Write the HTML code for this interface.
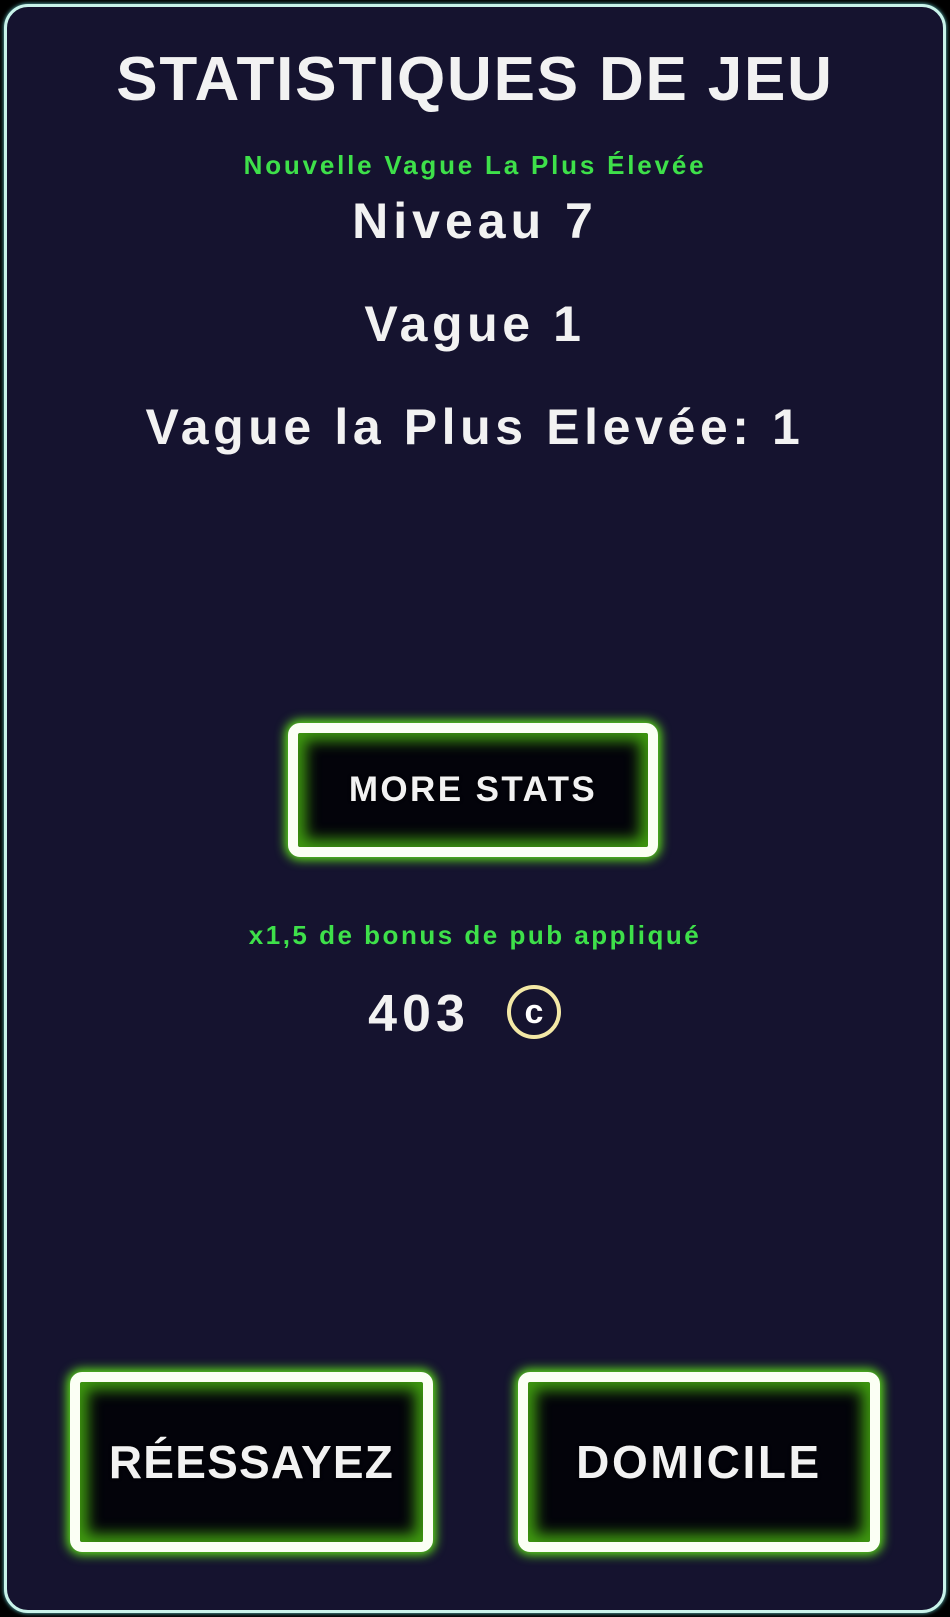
<!DOCTYPE html>
<html><head><meta charset="utf-8"><style>
html,body{margin:0;padding:0;background:#000;width:950px;height:1617px;overflow:hidden}
body{font-family:"Liberation Sans",sans-serif;font-weight:bold;color:#f2f2f2}
.panel{position:absolute;left:4px;top:4px;width:936px;height:1603px;border:3px solid #c8f3ea;border-radius:24px;background:#15132f;box-shadow:0 0 4px #6cc}
.t{position:absolute;left:0;width:950px;text-align:center;white-space:nowrap}
.btn{position:absolute;border:10px solid #fbfff4;border-radius:12px;background:#03030a;box-shadow:0 0 10px 3px #5ee21a,inset 0 0 14px 8px #3f9a10;display:flex;align-items:center;justify-content:center;color:#f2f2f2}
.btn span{text-shadow:0 0 3px #000}
</style></head><body>
<div class="panel"></div>
<div class="t" style="top:44px;font-size:62px;letter-spacing:1.8px">STATISTIQUES DE JEU</div>
<div class="t" style="top:150px;font-size:26px;color:#3ee04a;letter-spacing:2.8px">Nouvelle Vague La Plus Élevée</div>
<div class="t" style="top:192px;font-size:50px;letter-spacing:5px">Niveau 7</div>
<div class="t" style="top:295px;font-size:50px;letter-spacing:4.6px">Vague 1</div>
<div class="t" style="top:398px;font-size:50px;letter-spacing:4.6px">Vague la Plus Elevée: 1</div>
<div class="btn" style="left:288px;top:723px;width:350px;height:114px"><span style="font-size:35px;letter-spacing:2.4px">MORE STATS</span></div>
<div class="t" style="top:920px;font-size:26px;color:#3ee04a;letter-spacing:2.5px">x1,5 de bonus de pub appliqué</div>
<div class="t" style="top:984px;font-size:52px;left:-56px;letter-spacing:5px">403</div>
<div style="position:absolute;left:507px;top:985px;width:54px;height:54px;border:4px solid #f3e8a6;border-radius:50%;box-sizing:border-box;display:flex;align-items:center;justify-content:center;font-size:34px;color:#fff">c</div>
<div class="btn" style="left:70px;top:1372px;width:343px;height:160px"><span style="font-size:46px;letter-spacing:1.2px">RÉESSAYEZ</span></div>
<div class="btn" style="left:518px;top:1372px;width:342px;height:160px"><span style="font-size:46px;letter-spacing:2.6px">DOMICILE</span></div>
</body></html>
